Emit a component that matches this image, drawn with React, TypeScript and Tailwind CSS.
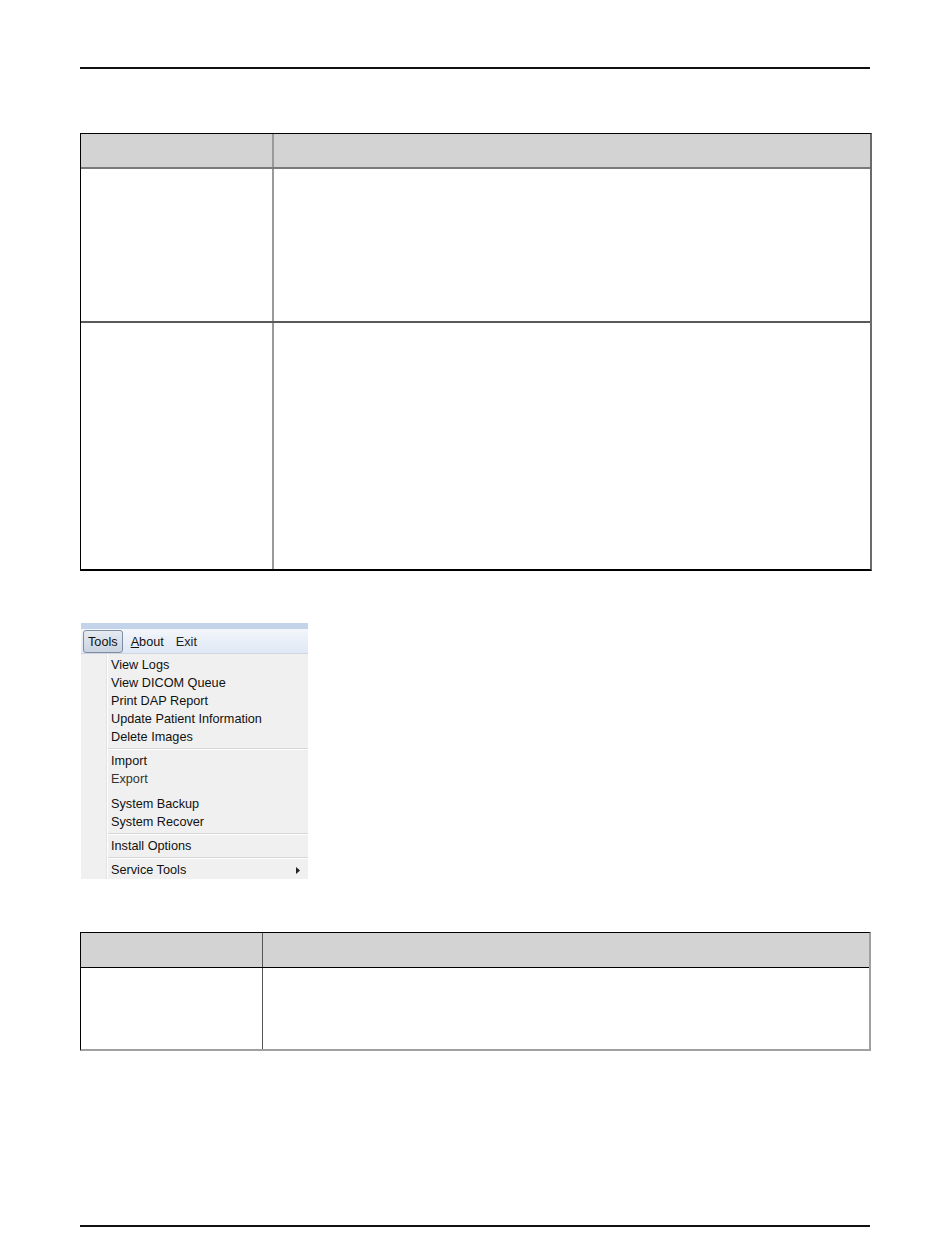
import React from "react";

function Table1() {
  return (
    <div className="mt-[64px] w-[792px] border-t border-l border-b-2 border-black border-r-2 border-r-[#6b6b6b]">
      <div className="flex h-[35px] bg-[#d3d3d3] border-b-2 border-b-[#7a7a7a]">
        <div className="w-[193px] border-r-2 border-r-[#9a9a9a]" />
        <div className="flex-1" />
      </div>
      <div className="flex h-[154px] border-b-2 border-b-[#5a5a5a]">
        <div className="w-[193px] border-r-2 border-r-[#9a9a9a]" />
        <div className="flex-1" />
      </div>
      <div className="flex h-[246px]">
        <div className="w-[193px] border-r-2 border-r-[#9a9a9a]" />
        <div className="flex-1" />
      </div>
    </div>
  );
}

function Table2() {
  return (
    <div className="mt-[53px] w-[791px] border-t border-l border-black border-r-2 border-r-[#a0a0a0] border-b-2 border-b-[#a0a0a0]">
      <div className="flex h-[35px] bg-[#d3d3d3] border-b border-b-black">
        <div className="w-[182px] border-r border-r-[#555]" />
        <div className="flex-1" />
      </div>
      <div className="flex h-[81px]">
        <div className="w-[182px] border-r border-r-[#555]" />
        <div className="flex-1" />
      </div>
    </div>
  );
}

function Item({ label, muted }: { label: string; muted?: boolean }) {
  return (
    <div className={`h-[18px] leading-[18px] pl-[30px] ${muted ? "text-[#333]" : "text-[#111]"}`}>{label}</div>
  );
}

function Sep() {
  return (
    <div className="h-[6px] flex items-center pl-[27px]">
      <div className="flex-1 border-t border-t-[#d6d6d6] border-b border-b-white" />
    </div>
  );
}

function Menu() {
  return (
    <div
      className="mt-[52px] ml-[1px] w-[227px] h-[256px] overflow-hidden bg-[#f0f0f0] text-[12.7px]"
      style={{ fontFamily: '"Liberation Sans", Arial, sans-serif' }}
    >
      <div className="h-[6px] bg-[#c3d4ea]" />
      <div className="h-[25px] flex items-center bg-gradient-to-b from-[#f3f6fb] to-[#dfe8f5] border-b border-b-[#d0d7e2] pl-[2px]">
        <div className="h-[23px] pt-[3px] px-[4px] flex items-center rounded-[3px] border border-[#7e8da3] bg-gradient-to-b from-[#e6ebf2] to-[#c9d3e0] text-[#111]">
          Tools
        </div>
        <div className="ml-[8px] pt-[3px] text-[#111]">
          <span className="underline">A</span>bout
        </div>
        <div className="ml-[12px] pt-[3px] text-[#222]">Exit</div>
      </div>
      <div className="relative pt-[2px]">
        <div className="absolute left-[25px] top-0 bottom-0 w-[1px] bg-[#e2e3e3]" />
        <div className="absolute left-[26px] top-0 bottom-0 w-[1px] bg-white" />
        <Item label="View Logs" />
        <Item label="View DICOM Queue" />
        <Item label="Print DAP Report" />
        <Item label="Update Patient Information" />
        <Item label="Delete Images" />
        <Sep />
        <Item label="Import" />
        <Item label="Export" muted />
        <div className="h-[7px]" />
        <Item label="System Backup" />
        <Item label="System Recover" />
        <Sep />
        <Item label="Install Options" />
        <Sep />
        <div className="relative">
          <Item label="Service Tools" />
          <svg className="absolute right-[8px] top-[6px]" width="4" height="7" viewBox="0 0 4 7">
            <path d="M0 0 L4 3.5 L0 7 Z" fill="#222" />
          </svg>
        </div>
      </div>
    </div>
  );
}

export default function App() {
  return (
    <div className="w-[950px] h-[1254px] bg-white relative">
      <div className="pt-[67px] px-[80px]">
        <div className="w-[790px] h-[2px] bg-[#111]" />
        <Table1 />
        <Menu />
        <Table2 />
      </div>
      <div className="absolute left-[80px] top-[1225px] w-[790px] h-[2px] bg-[#111]" />
    </div>
  );
}
